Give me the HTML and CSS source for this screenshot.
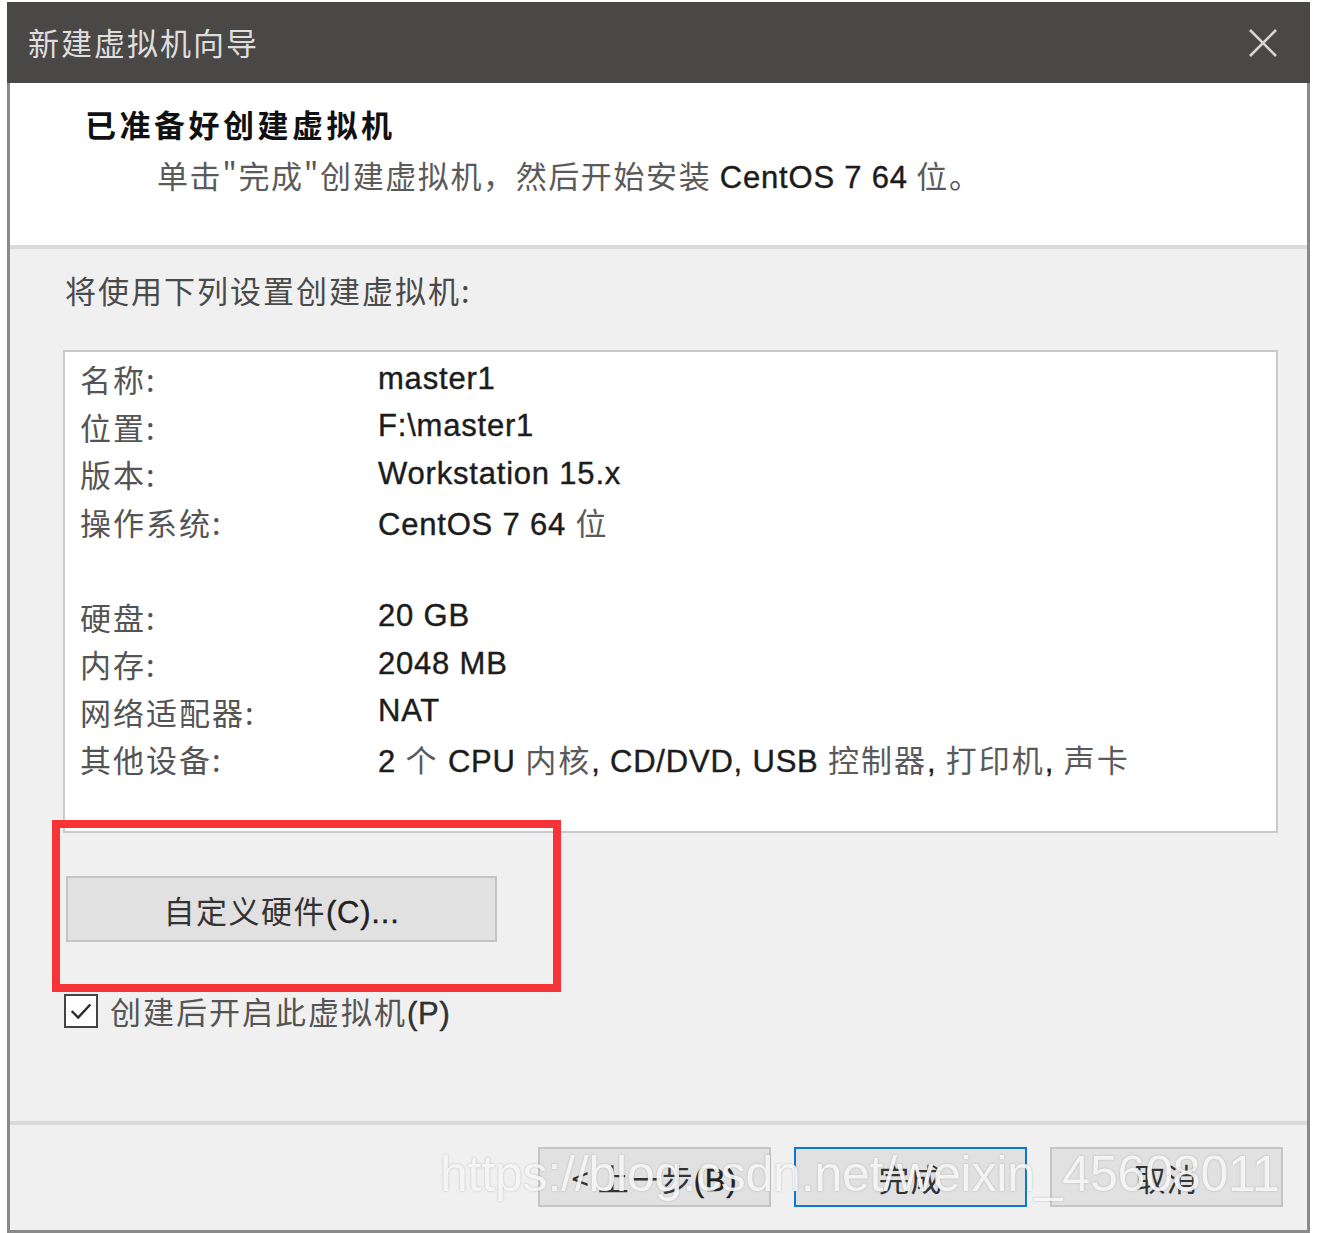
FILE: index.html
```html
<!DOCTYPE html>
<html lang="zh-CN">
<head>
    <meta charset="UTF-8">
    <title>新建虚拟机向导</title>
    <link rel="stylesheet" href="styles.css">
</head>
<body>
    <div class="dialog">
        <div class="titlebar">
            <div class="title">新建虚拟机向导</div>
            <svg class="close" viewBox="0 0 30 30" fill="none" stroke="#d6d6d4" stroke-width="2.6">
                <path d="M2 2 L28 28 M28 2 L2 28"></path>
            </svg>
        </div>

        <div class="header">
            <h1 class="heading">已准备好创建虚拟机</h1>
            <p class="subtitle">单击"完成"创建虚拟机，然后开始安装 <span class="latin">CentOS 7 64</span> 位。</p>
        </div>

        <div class="content">
            <p class="intro">将使用下列设置创建虚拟机:</p>

            <div class="summary">
                <div class="row"><span class="label">名称:</span><span class="value">master1</span></div>
                <div class="row"><span class="label">位置:</span><span class="value">F:\master1</span></div>
                <div class="row"><span class="label">版本:</span><span class="value">Workstation 15.x</span></div>
                <div class="row"><span class="label">操作系统:</span><span class="value">CentOS 7 64 <span class="cjk">位</span></span></div>
                <div class="row blank"></div>
                <div class="row"><span class="label">硬盘:</span><span class="value">20 GB</span></div>
                <div class="row"><span class="label">内存:</span><span class="value">2048 MB</span></div>
                <div class="row"><span class="label">网络适配器:</span><span class="value">NAT</span></div>
                <div class="row"><span class="label">其他设备:</span><span class="value">2 <span class="cjk">个</span> CPU <span class="cjk">内核</span>, CD/DVD, USB <span class="cjk">控制器</span>, <span class="cjk">打印机</span>, <span class="cjk">声卡</span></span></div>
            </div>

            <div class="custom-wrap">
                <button class="btn custom">自定义硬件<span class="latin">(C)...</span></button>
            </div>

            <label class="check">
                <span class="box">
                    <svg viewBox="0 0 30 30" fill="none" stroke="#2a2a2a" stroke-width="2.6">
                        <path d="M5 15 L12 22 L25 8"></path>
                    </svg>
                </span>
                <span class="check-text">创建后开启此虚拟机<span class="latin">(P)</span></span>
            </label>
        </div>

        <div class="footer">
            <button class="btn">&lt; 上一步<span class="latin">(B)</span></button>
            <button class="btn primary">完成</button>
            <button class="btn">取消</button>
        </div>

        <!-- annotation & watermark sit on top of the dialog -->
        <div class="highlight"></div>
        <div class="watermark">https://blog.csdn.net/weixin_45608011</div>
    </div>
</body>
</html>
```

FILE: styles.css
```css
* {
    margin: 0;
    padding: 0;
    box-sizing: border-box;
}

body {
    background-color: #ffffff;
    font-family: "Noto Sans CJK SC", "Liberation Sans", sans-serif;
}

.dialog {
    position: relative;
    width: 1303px;
    height: 1231px;
    margin: 2px 0 0 7px;
    border: 3px solid #8a8a8a;
    border-top: none;
    background-color: #f0f0f0;
    display: flex;
    flex-direction: column;
}

.titlebar {
    height: 81px;
    margin: 0 -3px;
    background-color: #4a4846;
    display: flex;
    align-items: center;
    justify-content: space-between;
    padding: 0 32px 0 21px;
}

.title {
    color: #dedede;
    font-size: 31px;
    letter-spacing: 2px;
    margin-top: -3px;
}

.close {
    width: 30px;
    height: 30px;
}

.header {
    height: 166px;
    background-color: #ffffff;
    border-bottom: 4px solid #dadada;
    padding: 21px 0 0 75px;
}

.heading {
    font-size: 31px;
    font-weight: bold;
    color: #111;
    line-height: 40px;
    letter-spacing: 3.5px;
}

.subtitle {
    margin: 11px 0 0 72px;
    font-size: 31px;
    line-height: 40px;
    color: #5a5a5a;
    letter-spacing: 1.6px;
}

.latin {
    font-family: "Liberation Sans", "Noto Sans CJK SC", sans-serif;
    color: #1c1c1c;
    letter-spacing: 0.8px;
    -webkit-text-stroke: 0.4px #1c1c1c;
}

.cjk {
    font-family: "Noto Sans CJK SC", sans-serif;
    color: #5a5a5a;
    letter-spacing: 2px;
    -webkit-text-stroke: 0;
}

.content {
    flex: 1;
    padding: 21px 29px 0 53px;
    border-bottom: 4px solid #dadada;
}

.intro {
    margin-left: 2px;
    font-size: 31px;
    line-height: 40px;
    color: #4a4a4a;
    letter-spacing: 2px;
}

.summary {
    margin-top: 40px;
    height: 483px;
    background-color: #ffffff;
    border: 2px solid #c9c9cf;
    padding: 3px 0 0 15px;
}

.row {
    display: flex;
    height: 47.5px;
    align-items: center;
}

.label {
    width: 298px;
    font-size: 31px;
    color: #545454;
    letter-spacing: 2px;
}

.value {
    font-family: "Liberation Sans", "Noto Sans CJK SC", sans-serif;
    font-size: 31px;
    color: #1c1c1c;
    letter-spacing: 0.8px;
    -webkit-text-stroke: 0.4px #1c1c1c;
}

.custom-wrap {
    padding: 43px 0 0 3px;
}

.btn {
    height: 60px;
    width: 233px;
    background-color: #e1e1e1;
    border: 2px solid #c4c4c4;
    font-family: "Noto Sans CJK SC", "Liberation Sans", sans-serif;
    font-size: 31px;
    color: #333;
    letter-spacing: 1px;
    cursor: pointer;
}

.btn .latin {
    color: #222;
}

.custom {
    width: 431px;
    height: 66px;
    letter-spacing: 1.5px;
}

.check {
    display: flex;
    align-items: center;
    gap: 12px;
    margin: 46px 0 0 1px;
}

.box {
    width: 34px;
    height: 34px;
    border: 2px solid #444;
    background-color: #ffffff;
    display: flex;
    align-items: center;
    justify-content: center;
}

.box svg {
    width: 28px;
    height: 28px;
}

.check-text {
    font-size: 31px;
    color: #555;
    letter-spacing: 2px;
}

.check-text .latin {
    color: #333;
}

.footer {
    height: 105px;
    display: flex;
    justify-content: flex-end;
    align-items: flex-start;
    gap: 23px;
    padding: 22px 24px 0 0;
}

.btn.primary {
    border-color: #0a78d6;
}

.highlight {
    position: absolute;
    left: 42px;
    top: 818px;
    width: 509px;
    height: 172px;
    border: 8px solid #f53438;
}

.watermark {
    position: absolute;
    left: 430px;
    top: 1143px;
    font-family: "Liberation Sans", sans-serif;
    font-size: 50px;
    letter-spacing: -0.2px;
    color: rgba(255, 255, 255, 0.85);
    text-shadow: 0 0 2px rgba(120, 120, 120, 0.5);
    white-space: nowrap;
}
```
